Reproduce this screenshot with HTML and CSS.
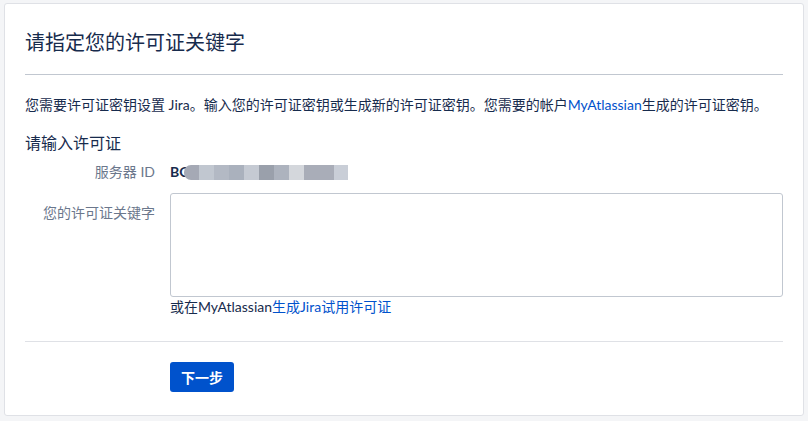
FILE: index.html
```html
<!DOCTYPE html>
<html lang="zh-CN">
<head>
<meta charset="utf-8">
<title>请指定您的许可证关键字</title>
<link rel="stylesheet" href="styles.css">
</head>
<body>
<div class="card">
  <h1 class="title">请指定您的许可证关键字</h1>
  <hr class="rule">
  <p class="intro">您需要许可证密钥设置 Jira。输入您的许可证密钥或生成新的许可证密钥。您需要的帐户<a href="#" class="link">MyAtlassian</a>生成的许可证密钥。</p>
  <h2 class="sub">请输入许可证</h2>
  <div class="form">
    <div class="label">服务器 ID</div>
    <div class="value"><span class="id-text">BC</span><span class="blur"><span class="b b1"></span><span class="b b2"></span><span class="b b3"></span><span class="b b4"></span><span class="b b5"></span><span class="b b6"></span><span class="b b7"></span><span class="b b8"></span><span class="b b9"></span><span class="b b10"></span></span></div>
    <div class="label label-top">您的许可证关键字</div>
    <div class="field">
      <textarea class="textarea"></textarea>
      <div class="help">或在MyAtlassian<a href="#" class="link">生成Jira试用许可证</a></div>
    </div>
  </div>
  <hr class="rule rule-light">
  <div class="actions">
    <button class="btn">下一步</button>
  </div>
</div>
</body>
</html>
```
FILE: styles.css
```css
* { box-sizing: border-box; }
html, body { margin: 0; padding: 0; }
body {
  background: #f4f5f7;
  font-family: "Lato", "Noto Sans CJK SC", sans-serif;
  color: #172b4d;
  font-size: 14px;
}
.card {
  margin: 3px 0 0 4px;
  width: 800px;
  height: 413px;
  background: #fff;
  border: 1px solid #dfe1e6;
  border-radius: 3px;
  padding: 24px 20px 0 20px;
}
.title {
  margin: 0;
  font-size: 20px;
  line-height: 28px;
  font-weight: 400;
  color: #172b4d;
}
.rule {
  margin: 18px 0 0 0;
  border: 0;
  height: 1px;
  background: #c1c7d0;
}
.intro {
  margin: 20px 0 0 0;
  line-height: 20px;
  font-size: 14px;
}
.link { color: #0052cc; text-decoration: none; }
.sub {
  margin: 16px 0 0 0;
  font-size: 16px;
  line-height: 24px;
  font-weight: 400;
}
.form {
  margin-top: 7px;
  display: grid;
  grid-template-columns: 130px 1fr;
  column-gap: 15px;
  row-gap: 11px;
}
.label {
  text-align: right;
  color: #6b778c;
  line-height: 20px;
}
.label-top { padding-top: 10px; }
.value {
  display: flex;
  align-items: center;
  line-height: 20px;
}
.id-text { font-weight: 700; }
.blur { display: inline-flex; height: 15px; margin-left: -4px; }
.b { display: block; height: 15px; width: 15px; }
.b1 { background: #a5a9b5; border-radius: 7px 0 0 7px; }
.b2 { background: #c1c7d0; }
.b3 { background: #b3b9c4; }
.b4 { background: #aab1bd; }
.b5 { background: #c5cad3; }
.b6 { background: #9aa0ab; }
.b7 { background: #adb3be; }
.b8 { background: #d4d7dc; }
.b9 { background: #a9adb8; width: 30px; }
.b10 { background: #c9ced7; width: 14px; }
.field { display: flex; flex-direction: column; }
.textarea {
  display: block;
  width: 613px;
  height: 104px;
  border: 1px solid #c1c7d0;
  border-radius: 3px;
  resize: none;
  margin: 0;
  font-family: inherit;
}
.help { line-height: 20px; }
.rule-light { background: #dfe1e6; margin-top: 24px; }
.actions { padding: 20px 0 0 145px; }
.btn {
  height: 30px;
  width: 64px;
  background: #0052cc;
  color: #fff;
  border: 0;
  border-radius: 3px;
  font-family: inherit;
  font-size: 14px;
  font-weight: 700;
  padding: 0;
}
```
